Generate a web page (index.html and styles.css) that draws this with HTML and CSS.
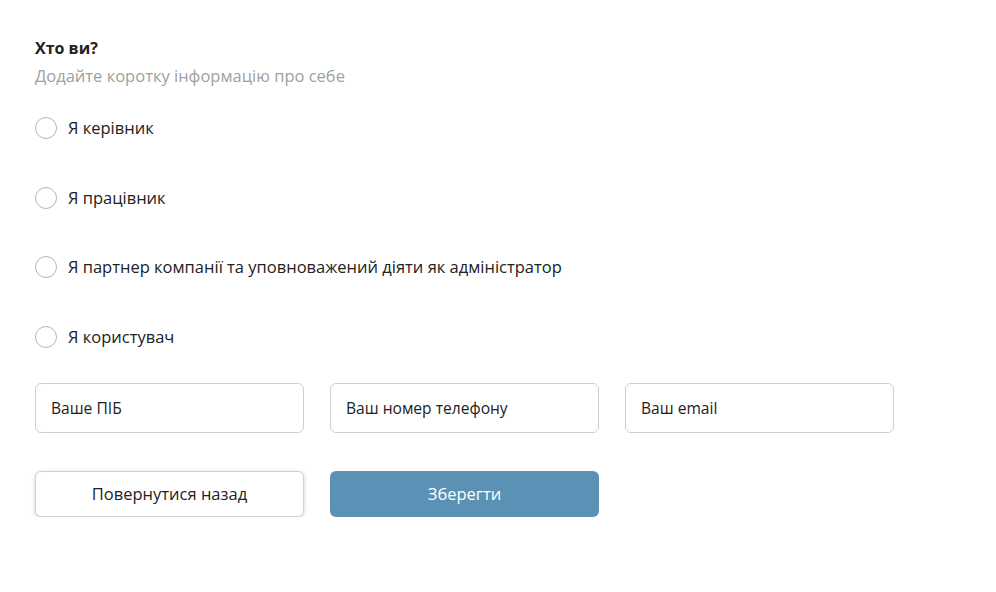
FILE: index.html
```html
<!DOCTYPE html>
<html lang="uk">
<head>
<meta charset="utf-8">
<title>Хто ви?</title>
<link rel="stylesheet" href="styles.css">
</head>
<body>
<main class="form">
  <h2 class="title">Хто ви?</h2>
  <p class="subtitle">Додайте коротку інформацію про себе</p>
  <div class="options">
    <label class="option"><span class="radio"></span><span>Я керівник</span></label>
    <label class="option"><span class="radio"></span><span>Я працівник</span></label>
    <label class="option"><span class="radio"></span><span>Я партнер компанії та уповноважений діяти як адміністратор</span></label>
    <label class="option"><span class="radio"></span><span>Я користувач</span></label>
  </div>
  <div class="fields">
    <div class="field">Ваше ПІБ</div>
    <div class="field">Ваш номер телефону</div>
    <div class="field">Ваш email</div>
  </div>
  <div class="actions">
    <button class="btn btn-back">Повернутися назад</button>
    <button class="btn btn-save">Зберегти</button>
  </div>
</main>
</body>
</html>
```
FILE: styles.css
```css
* { box-sizing: border-box; }
body {
  margin: 0;
  background: #fff;
  font-family: "Open Sans", "Noto Sans", sans-serif;
  color: #222;
}
.form {
  padding: 36px 35px 0 35px;
}
.title {
  margin: 0;
  font-size: 16px;
  font-weight: 700;
  line-height: 24px;
  color: #222;
}
.subtitle {
  margin: 4px 0 0;
  font-size: 16.5px;
  line-height: 24px;
  color: #a0a0a0;
}
.options {
  display: flex;
  flex-direction: column;
  gap: 47.5px;
  margin-top: 29px;
}
.option {
  display: flex;
  align-items: center;
  gap: 11px;
  font-size: 16.5px;
  line-height: 22px;
  color: #222;
}
.radio {
  width: 22px;
  height: 22px;
  border: 1px solid #b5b5b5;
  border-radius: 50%;
  flex: none;
}
.fields {
  display: flex;
  gap: 26px;
  margin-top: 35px;
}
.field {
  width: 269px;
  height: 50px;
  border: 1px solid #cfcfcf;
  border-radius: 6px;
  padding: 0 15px;
  display: flex;
  align-items: center;
  font-size: 15.6px;
  color: #222;
}
.actions {
  display: flex;
  gap: 26px;
  margin-top: 38px;
}
.btn {
  width: 269px;
  height: 46px;
  border-radius: 6px;
  font-family: inherit;
  font-size: 16.5px;
  cursor: pointer;
}
.btn-back {
  background: #fff;
  border: 1px solid #d0d0d0;
  box-shadow: 0 1px 4px rgba(0,0,0,0.18);
  color: #222;
}
.btn-save {
  background: #5b91b4;
  border: none;
  color: #fff;
}
```
